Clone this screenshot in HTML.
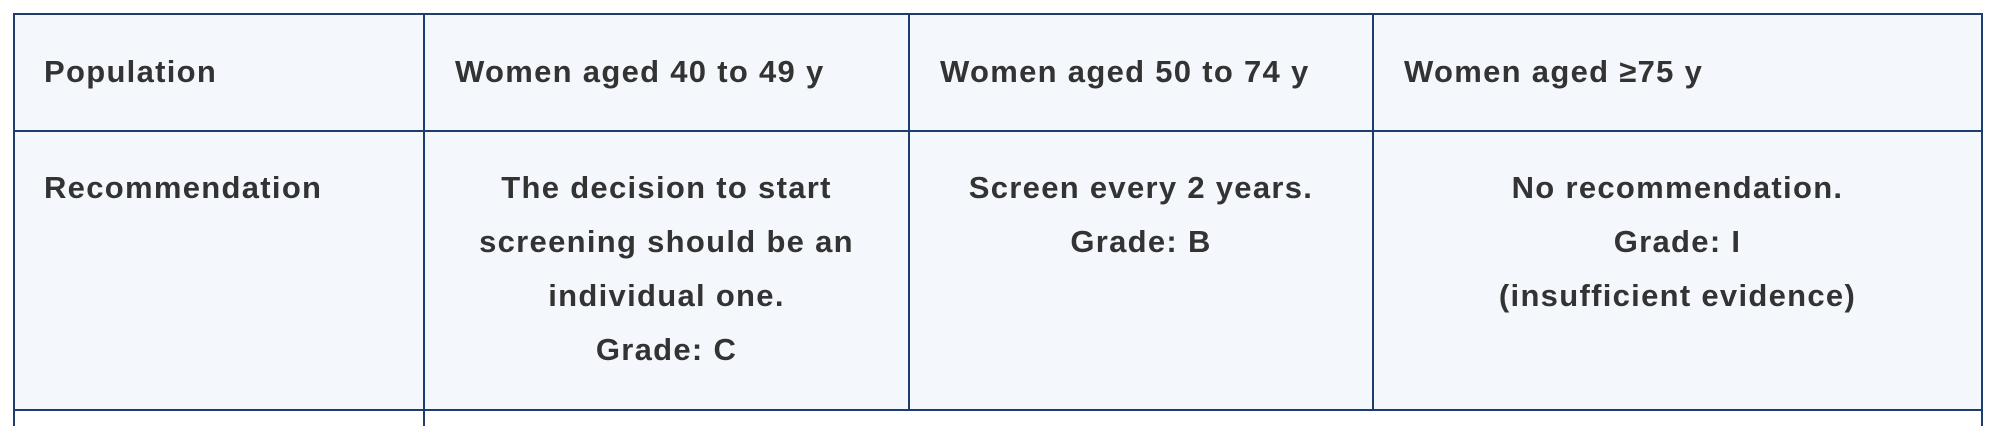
<!DOCTYPE html>
<html style="height:426px;overflow:hidden"><head><style>
body{margin:0;width:1994px;height:426px;background:#fff;overflow:hidden;font-family:"Liberation Sans",sans-serif;position:relative;}
.c{position:absolute;background:#f4f8fc;border:2px solid #1d3d6e;box-sizing:border-box;}
.t{position:absolute;line-height:54px;color:#333;font-weight:bold;font-size:31px;letter-spacing:1.3px;white-space:nowrap;}
</style></head><body>
<div class="c" style="left:13px;top:13px;width:412px;height:119px"></div>
<div class="c" style="left:423px;top:13px;width:487px;height:119px"></div>
<div class="c" style="left:908px;top:13px;width:466px;height:119px"></div>
<div class="c" style="left:1372px;top:13px;width:611px;height:119px"></div>
<div class="c" style="left:13px;top:130px;width:412px;height:281px"></div>
<div class="c" style="left:423px;top:130px;width:487px;height:281px"></div>
<div class="c" style="left:908px;top:130px;width:466px;height:281px"></div>
<div class="c" style="left:1372px;top:130px;width:611px;height:281px"></div>
<div class="c" style="left:13px;top:409px;width:412px;height:17px;background:#fff;border-bottom:none"></div>
<div class="c" style="left:423px;top:409px;width:1560px;height:17px;background:#fff;border-bottom:none"></div>
<div class="t" style="left:44px;top:45px">Population</div>
<div class="t" style="left:455px;top:45px">Women aged 40 to 49 y</div>
<div class="t" style="left:940px;top:45px">Women aged 50 to 74 y</div>
<div class="t" style="left:1404px;top:45px">Women aged ≥75 y</div>
<div class="t" style="left:44px;top:161px">Recommendation</div>
<div class="t" style="left:425px;width:483px;top:161px;text-align:center">The decision to start<br>screening should be an<br>individual one.<br>Grade: C</div>
<div class="t" style="left:910px;width:462px;top:161px;text-align:center">Screen every 2 years.<br>Grade: B</div>
<div class="t" style="left:1374px;width:607px;top:161px;text-align:center">No recommendation.<br>Grade: I<br>(insufficient evidence)</div>
</body></html>
